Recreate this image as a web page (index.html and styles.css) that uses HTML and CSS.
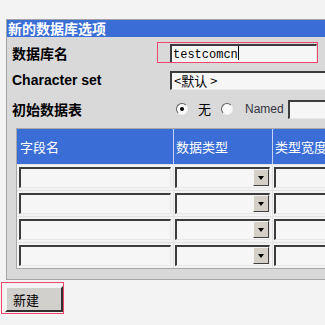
FILE: index.html
```html
<!DOCTYPE html>
<html>
<head>
<meta charset="utf-8">
<link rel="stylesheet" href="styles.css">
</head>
<body>
<div class="panel">
  <div class="title">新的数据库选项</div>
  <div class="form">
    <div class="label r1">数据库名</div>
    <div class="field r1"><span class="input name-input">testcomcn<span class="caret"></span></span></div>
    <div class="label latin r2">Character set</div>
    <div class="field r2"><span class="input select-wide">&lt;默认 &gt;</span></div>
    <div class="label r3">初始数据表</div>
    <div class="field r3 radios">
      <span class="radio checked"></span><span class="opt">无</span>
      <span class="radio second"></span><span class="named">Named</span>
      <span class="input named-input"></span>
    </div>
  </div>
  <div class="grid">
    <div class="hd c1">字段名</div>
    <div class="hd c2">数据类型</div>
    <div class="hd c3">类型宽度</div>

    <div class="cell c1"><span class="input col-input"></span></div>
    <div class="cell c2"><span class="input col-select"><span class="drop"></span></span></div>
    <div class="cell c3"><span class="input col-width"></span></div>

    <div class="cell c1"><span class="input col-input"></span></div>
    <div class="cell c2"><span class="input col-select"><span class="drop"></span></span></div>
    <div class="cell c3"><span class="input col-width"></span></div>

    <div class="cell c1"><span class="input col-input"></span></div>
    <div class="cell c2"><span class="input col-select"><span class="drop"></span></span></div>
    <div class="cell c3"><span class="input col-width"></span></div>

    <div class="cell c1"><span class="input col-input"></span></div>
    <div class="cell c2"><span class="input col-select"><span class="drop"></span></span></div>
    <div class="cell c3"><span class="input col-width"></span></div>
  </div>
</div>
<button class="btn">新建</button>
<div class="mark mark-name"></div>
<div class="mark mark-btn"></div>
</body>
</html>
```
FILE: styles.css
```css
html, body {
  margin: 0;
  padding: 0;
}
body {
  width: 325px;
  height: 325px;
  overflow: hidden;
  position: relative;
  background: #f3f3f3;
  font-family: "Noto Sans CJK SC", "Liberation Sans", sans-serif;
  color: #000;
  padding-top: 19px;
  box-sizing: border-box;
}
.panel {
  margin-left: 6px;
  width: 330px;
  border: 1px solid #a4a4a4;
  background: #d9d9d9;
  padding-bottom: 10px;
}
.title {
  height: 17px;
  line-height: 17px;
  background: #3a6ed6;
  color: #fff;
  font-weight: bold;
  font-size: 14px;
  padding-left: 1px;
}
.form {
  display: grid;
  grid-template-columns: 163px 1fr;
  grid-template-rows: 32px 22px 36px;
  align-items: center;
}
.label {
  padding-left: 5px;
  font-size: 14px;
  font-weight: bold;
  line-height: 16px;
}
.latin {
  font-family: "Liberation Sans", sans-serif;
  font-size: 14px;
}
.field {
  display: flex;
  align-items: center;
}
.input {
  display: inline-block;
  box-sizing: border-box;
  background: #f6f6f6;
  border-style: solid;
  border-width: 2px 1px 1px 2px;
  border-color: #3c3c3c #e8e8e8 #e8e8e8 #3c3c3c;
  position: relative;
}
.name-input {
  width: 147px;
  height: 19px;
  font-family: "Liberation Mono", monospace;
  font-size: 12px;
  line-height: 15px;
  padding-left: 1px;
}
.caret {
  display: inline-block;
  width: 1px;
  height: 14px;
  background: #000;
  vertical-align: -2px;
}
.select-wide {
  width: 160px;
  height: 19px;
  font-size: 13px;
  line-height: 15px;
  padding-left: 2px;
}
.radios {
  padding-left: 6px;
}
.radio {
  display: inline-block;
  width: 12px;
  height: 12px;
  box-sizing: border-box;
  border-radius: 50%;
  border: 1px solid;
  border-color: #606060 #f0f0f0 #f0f0f0 #606060;
  background: #fafafa;
  position: relative;
}
.radio.checked::after {
  content: "";
  position: absolute;
  left: 3px;
  top: 3px;
  width: 4px;
  height: 4px;
  border-radius: 50%;
  background: #000;
}
.opt {
  font-size: 13px;
  margin-left: 10px;
  margin-right: 10px;
  line-height: 16px;
}
.named {
  font-family: "Liberation Sans", sans-serif;
  font-size: 12px;
  color: #333340;
  margin-left: 12px;
  margin-right: 4px;
}
.named-input {
  width: 50px;
  height: 19px;
}
.grid {
  margin-top: 1px;
  margin-left: 9px;
  width: 320px;
  display: grid;
  grid-template-columns: 156px 99px 1fr;
  border: 1px solid #a8a8a8;
  border-right: none;
  background: #f3f3f3;
}
.hd {
  height: 35px;
  background: #3a6ed6;
  color: #fff;
  font-size: 13px;
  line-height: 35px;
  box-sizing: border-box;
}
.hd.c1 { padding-left: 3px; }
.hd.c2, .hd.c3 {
  border-left: 1px solid #c4d4f2;
  padding-left: 2px;
}
.cell {
  height: 26px;
  box-sizing: border-box;
  border-top: 1px solid #e2e2e2;
  padding-top: 2px;
}
.cell.c1 { padding-left: 2px; }
.cell.c2, .cell.c3 {
  border-left: 1px solid #e2e2e2;
  padding-left: 1px;
}
.col-input {
  width: 152px;
  height: 21px;
}
.col-select {
  width: 95px;
  height: 21px;
}
.col-width {
  width: 60px;
  height: 21px;
}
.drop {
  position: absolute;
  right: 0;
  top: 0;
  width: 16px;
  height: 17px;
  box-sizing: border-box;
  background: #d4d0c8;
  border: 1px solid;
  border-color: #f4f4f4 #404040 #404040 #f4f4f4;
}
.drop::after {
  content: "";
  position: absolute;
  left: 4px;
  top: 6px;
  border-left: 3px solid transparent;
  border-right: 3px solid transparent;
  border-top: 4px solid #000;
}
.btn {
  display: block;
  margin: 6px 0 0 5px;
  width: 58px;
  height: 26px;
  box-sizing: border-box;
  background: #d2d0cc;
  border: 2px solid;
  border-color: #f4f4f4 #303030 #303030 #f4f4f4;
  font-family: "Noto Sans CJK SC", sans-serif;
  font-size: 13px;
  text-align: left;
  padding: 0 0 0 6px;
  color: #000;
}
.mark {
  position: absolute;
  border: 1px solid #f2456c;
  box-sizing: border-box;
}
.mark-name {
  left: 157px;
  top: 42px;
  width: 161px;
  height: 21px;
}
.mark-btn {
  left: 1px;
  top: 282px;
  width: 63px;
  height: 32px;
}
```
